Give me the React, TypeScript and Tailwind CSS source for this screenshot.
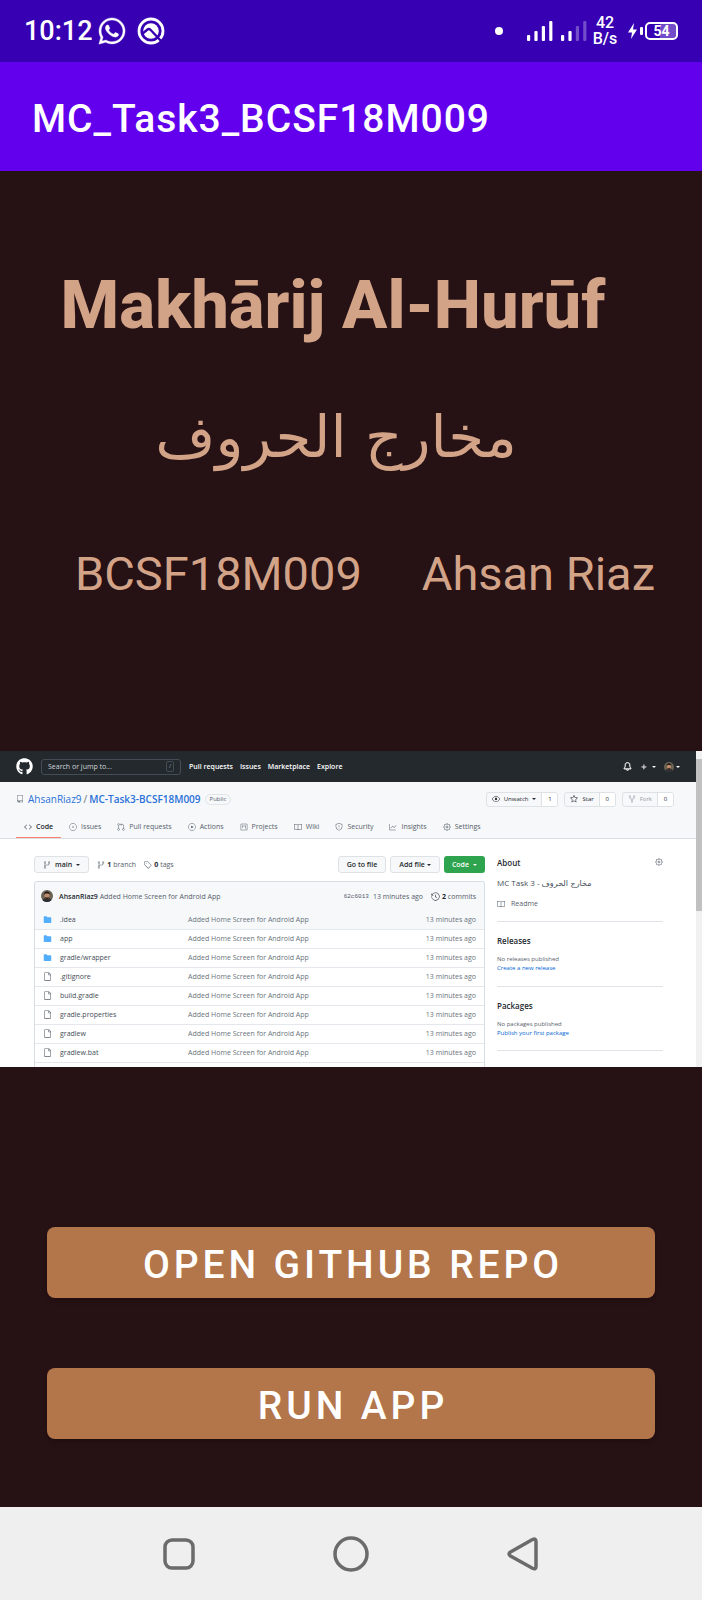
import type { ReactNode } from 'react';
import { FaGithub, FaWhatsapp } from 'react-icons/fa';
import {
  GoBell,
  GoBook,
  GoCode,
  GoEye,
  GoFile,
  GoFileDirectoryFill,
  GoGear,
  GoGitBranch,
  GoGitPullRequest,
  GoGraph,
  GoHistory,
  GoIssueOpened,
  GoPlay,
  GoPlus,
  GoProject,
  GoRepo,
  GoRepoForked,
  GoShield,
  GoStar,
  GoTag,
} from 'react-icons/go';

const files = [
  { name: '.idea', folder: true },
  { name: 'app', folder: true },
  { name: 'gradle/wrapper', folder: true },
  { name: '.gitignore', folder: false },
  { name: 'build.gradle', folder: false },
  { name: 'gradle.properties', folder: false },
  { name: 'gradlew', folder: false },
  { name: 'gradlew.bat', folder: false },
];

const tabs: { label: string; icon: ReactNode }[] = [
  { label: 'Code', icon: <GoCode /> },
  { label: 'Issues', icon: <GoIssueOpened /> },
  { label: 'Pull requests', icon: <GoGitPullRequest /> },
  { label: 'Actions', icon: <GoPlay /> },
  { label: 'Projects', icon: <GoProject /> },
  { label: 'Wiki', icon: <GoBook /> },
  { label: 'Security', icon: <GoShield /> },
  { label: 'Insights', icon: <GoGraph /> },
  { label: 'Settings', icon: <GoGear /> },
];

function Caret() {
  return (
    <svg viewBox="0 0 8 4" className="h-[2px] w-1 shrink-0" fill="currentColor" aria-hidden="true">
      <path d="M0 0h8L4 4z" />
    </svg>
  );
}

function Avatar({ className }: { className: string }) {
  return (
    <svg viewBox="0 0 24 24" className={className} aria-hidden="true">
      <circle cx="12" cy="12" r="12" fill="#6b6353" />
      <path d="M3 20a12 12 0 0 0 18 0c-2-3-5-4-9-4s-7 1-9 4z" fill="#2d2f33" />
      <ellipse cx="12" cy="11.500" rx="5" ry="6.500" fill="#c08d6c" />
      <path d="M6 10c0-5 3-7 6-7s6 2 6 7c-1-2-2-3-6-3s-5 1-6 3z" fill="#1f1a17" />
      <path d="M8 14c2 1 6 1 8 0 0 3-2 5-4 5s-4-2-4-5z" fill="#3a2a22" />
    </svg>
  );
}

function Signal({ active }: { active: number }) {
  const bars = [6, 10, 15, 20];
  return (
    <svg viewBox="0 0 26 20" className="h-5 w-[26px]" fill="#fff" aria-hidden="true">
      {bars.map((h, i) => (
        <rect key={h} x={i * 7.4} y={20 - h} width="3.200" height={h} rx="1" opacity={i < active ? 1 : 0.3} />
      ))}
    </svg>
  );
}

function StatusBar() {
  return (
    <div className="flex h-[62px] items-center bg-[#3700b3] pr-6 pl-6 text-white">
      <span className="text-[27px] leading-8 font-medium">10:12</span>
      <FaWhatsapp className="ml-1 size-[30px]" stroke="currentColor" strokeWidth="6" aria-label="WhatsApp" />
      <svg viewBox="0 0 28 28" className="ml-[10px] size-7" fill="none" aria-hidden="true">
        <circle cx="14" cy="14" r="12" stroke="#fff" strokeWidth="2.800" />
        <circle cx="14" cy="14" r="7.800" fill="#fff" />
        <path d="M5 17L10.500 12.500Q12 11.500 13.500 12.800L25 25" stroke="#3700b3" strokeWidth="2.400" />
      </svg>
      <span className="ml-auto size-2 rounded-full bg-white" />
      <span className="ml-6 flex gap-2">
        <Signal active={4} />
        <Signal active={2} />
      </span>
      <span className="ml-1 w-7 text-center text-base leading-4 font-medium">
        42
        <br />
        B/s
      </span>
      <svg viewBox="0 0 18 20" className="ml-2 h-5 w-[18px]" fill="#fff" aria-hidden="true">
        <path d="M7 2L1 11.500h4L4 18l6-9.500H6z" />
        <rect x="13" y="6" width="3" height="8" rx="1" />
      </svg>
      <span className="flex h-[18px] w-[33px] items-center justify-center rounded-[5px] border-2 border-white bg-linear-to-r from-transparent from-45% to-white/30 to-45% text-sm leading-4 font-bold">
        54
      </span>
    </div>
  );
}

function CountButton({ icon, label, count, caret, muted }: { icon: ReactNode; label: string; count: number; caret?: boolean; muted?: boolean }) {
  return (
    <div className="flex h-[15px] items-stretch overflow-hidden rounded-[3px] border border-[#dfe2e5] bg-[#f6f8fa] text-[6px]">
      <button className={`flex items-center gap-1 px-[5px] ${muted ? 'text-[#959da5]' : 'text-[#24292e]'}`}>
        <span className="text-[8px]">{icon}</span>
        {label}
        {caret && <Caret />}
      </button>
      <span className="flex w-4 items-center justify-center border-l border-[#dfe2e5] bg-white">{count}</span>
    </div>
  );
}

function RepoPage() {
  return (
    <section className="flex h-[316px] overflow-hidden bg-white font-['Open_Sans',sans-serif] text-[7px] leading-[9px] text-[#24292e]" aria-label="GitHub repository">
      <div className="min-w-0 grow">
        <header className="flex h-[31px] items-center bg-[#24292e] pr-4 pl-4 font-semibold text-white">
          <FaGithub className="size-[17px]" aria-label="GitHub" />
          <div className="ml-2 flex h-4 w-[140px] items-center rounded-[3px] border border-[#444d56] px-[6px]">
            <input aria-label="Search" placeholder="Search or jump to..." className="min-w-0 grow bg-transparent font-normal outline-none placeholder:text-[#d1d5da]" />
            <span className="flex h-[11px] w-2 items-center justify-center rounded-[2px] border border-[#444d56] text-[6px] font-normal text-[#8b949e]">/</span>
          </div>
          <nav className="ml-2 flex gap-[7px]">
            <a href="#pulls">Pull requests</a>
            <a href="#issues">Issues</a>
            <a href="#marketplace">Marketplace</a>
            <a href="#explore">Explore</a>
          </nav>
          <GoBell className="ml-auto size-[9px]" strokeWidth="1" />
          <span className="ml-2 flex items-center gap-1">
            <GoPlus className="size-2" strokeWidth="1" />
            <Caret />
          </span>
          <span className="ml-2 flex items-center gap-[2px]">
            <Avatar className="size-[10px]" />
            <Caret />
          </span>
        </header>

        <div className="border-b border-[#d8dee4] bg-[#f6f8fa] px-4">
          <div className="flex h-[34px] items-center">
            <GoRepo className="size-2 text-[#6a737d]" />
            <h2 className="ml-1 flex gap-[2px] text-[10px] leading-3 text-[#6a737d]">
              <a href="#owner" className="text-[#2a70d8]">AhsanRiaz9</a>/
              <a href="#repo" className="font-semibold text-[#2a70d8]">MC-Task3-BCSF18M009</a>
            </h2>
            <span className="ml-1 rounded-full border border-[#e1e4e8] px-1 text-[6px] text-[#57606a]">Public</span>
            <div className="mr-[6px] ml-auto flex gap-[6px]">
              <CountButton icon={<GoEye />} label="Unwatch" count={1} caret />
              <CountButton icon={<GoStar />} label="Star" count={0} />
              <CountButton icon={<GoRepoForked />} label="Fork" count={0} muted />
            </div>
          </div>
          <nav className="flex">
            {tabs.map((tab, i) => (
              <a
                key={tab.label}
                href={`#${tab.label}`}
                className={`flex h-[22px] items-center gap-1 border-b px-2 whitespace-nowrap ${i === 0 ? 'border-[#f9826c] font-semibold' : 'border-transparent text-[#57606a]'}`}
              >
                <span className="text-[8px]">{tab.icon}</span>
                {tab.label}
              </a>
            ))}
          </nav>
        </div>

        <div className="flex gap-3 pt-[17px] pr-[33px] pl-[34px]">
          <div className="min-w-0 grow">
            <div className="flex h-[17px] items-center">
              <button className="flex h-[17px] items-center gap-1 rounded-[3px] border border-[#dfe2e5] bg-[#f6f8fa] px-2 font-semibold">
                <GoGitBranch className="size-2 text-[#57606a]" />
                main
                <Caret />
              </button>
              <span className="ml-2 flex items-center gap-[2px] text-[#57606a]">
                <GoGitBranch className="size-2" />
                <b className="text-[#24292e]">1</b> branch
              </span>
              <span className="ml-2 flex items-center gap-[2px] text-[#57606a]">
                <GoTag className="size-2" />
                <b className="text-[#24292e]">0</b> tags
              </span>
              <div className="ml-auto flex gap-1 font-semibold">
                <button className="h-[17px] rounded-[3px] border border-[#dfe2e5] bg-[#f6f8fa] px-2">Go to file</button>
                <button className="flex h-[17px] items-center gap-[2px] rounded-[3px] border border-[#dfe2e5] bg-[#f6f8fa] px-2">
                  Add file
                  <Caret />
                </button>
                <button className="flex h-[17px] items-center gap-1 rounded-[3px] bg-[#2ea44f] px-2 text-white">
                  Code
                  <Caret />
                </button>
              </div>
            </div>

            <div className="mt-2 overflow-hidden rounded-t-[3px] border border-b-0 border-[#d5dde5]">
              <div className="flex h-7 items-center bg-[#f6f8fa] pr-2 pl-[6px] text-[#57606a]">
                <Avatar className="size-3" />
                <span className="ml-[6px]">
                  <b className="font-semibold text-[#24292e]">AhsanRiaz9</b> Added Home Screen for Android App
                </span>
                <span className="ml-auto font-['Liberation_Mono',monospace] text-[6px]">62c6013</span>
                <span className="ml-1">13 minutes ago</span>
                <GoHistory className="ml-2 size-[9px] text-[#24292e]" />
                <span className="ml-[2px]">
                  <b className="text-[#24292e]">2</b> commits
                </span>
              </div>
              <table className="w-full table-fixed">
                <tbody>
                  {files.map((file, i) => (
                    <tr key={file.name} className={`h-[19px] border-b border-[#e4e8ec] ${i === 0 ? 'bg-[#f6f8fa]' : 'bg-white'}`}>
                      <td className="w-[25px] pl-2">
                        {file.folder ? <GoFileDirectoryFill className="size-[9px] text-[#54aeff]" /> : <GoFile className="size-[9px] text-[#57606a]" />}
                      </td>
                      <td className="w-32 text-[#444d56]">{file.name}</td>
                      <td className="text-[#6a737d]">Added Home Screen for Android App</td>
                      <td className="w-20 pr-2 text-right text-[#6a737d]">13 minutes ago</td>
                    </tr>
                  ))}
                </tbody>
              </table>
              <div className="h-3" />
            </div>
          </div>

          <aside className="w-[166px] shrink-0">
            <div className="flex h-3 items-center justify-between">
              <h3 className="text-[8px] font-semibold">About</h3>
              <GoGear className="size-2 text-[#57606a]" />
            </div>
            <p className="mt-[10px] text-[8px] leading-[10px] text-[#444d56]">
              MC Task 3 - <span lang="ar" className="font-['DejaVu_Sans',sans-serif]">مخارج الحروف</span>
            </p>
            <a href="#readme" className="mt-[10px] flex items-center gap-[6px] text-[#57606a]">
              <GoBook className="size-2" />
              Readme
            </a>
            <div className="mt-[13px] h-[65px] border-t border-[#e1e4e8] pt-[14px]">
              <h3 className="text-[8px] leading-[10px] font-semibold">Releases</h3>
              <p className="mt-[9px] text-[6px] text-[#57606a]">No releases published</p>
              <a href="#release" className="block text-[6px] text-[#0366d6]">Create a new release</a>
            </div>
            <div className="h-[65px] border-y border-[#e1e4e8] pt-[14px]">
              <h3 className="text-[8px] leading-[10px] font-semibold">Packages</h3>
              <p className="mt-[9px] text-[6px] text-[#57606a]">No packages published</p>
              <a href="#package" className="block text-[6px] text-[#0366d6]">Publish your first package</a>
            </div>
          </aside>
        </div>
      </div>
      <div className="w-[6px] shrink-0 bg-[#f1f1f1] pt-2">
        <div className="h-[152px] bg-[#c1c1c1]" />
      </div>
    </section>
  );
}

export default function App() {
  return (
    <div className="flex min-h-screen flex-col bg-[#261114] font-[Roboto,sans-serif]">
      <StatusBar />
      <header className="flex h-[109px] items-center bg-[#6200ee] px-8 pt-1">
        <h1 className="text-[39px] leading-[48px] font-medium tracking-wide text-white">MC_Task3_BCSF18M009</h1>
      </header>

      <main className="flex grow flex-col text-[#d3a388]">
        <div className="flex flex-col items-center pt-[94px]">
          <h2 className="mr-9 text-[67px] leading-[80px] font-extrabold">Makhārij Al-Hurūf</h2>
          <p lang="ar" dir="rtl" className="mt-12 mr-[30px] font-['DejaVu_Sans',sans-serif] text-[58px] leading-[88px]">
            مخارج الحروف
          </p>
        </div>
        <div className="mt-[65px] mr-[47px] ml-[75px] flex justify-between text-[47px] leading-[56px]">
          <span>BCSF18M009</span>
          <span>Ahsan Riaz</span>
        </div>
        <div className="mt-[149px]">
          <RepoPage />
        </div>
        <div className="mt-40 mb-17 flex flex-col gap-[70px] px-[47px] text-[39px] leading-[48px] font-medium tracking-widest text-white">
          <button className="h-[71px] rounded-lg bg-[#b3754a] pt-1 pl-1 shadow-md">OPEN GITHUB REPO</button>
          <button className="h-[71px] rounded-lg bg-[#b3754a] pt-1 pl-1 shadow-md">RUN APP</button>
        </div>
      </main>

      <nav className="grid h-[93px] grid-cols-3 items-center bg-[#efefef] px-[93px] text-[#6b6b6b]">
        <button aria-label="Recent apps" className="flex justify-center">
          <svg viewBox="0 0 36 36" className="size-9" fill="none" stroke="currentColor" strokeWidth="3.500">
            <rect x="4" y="4" width="28" height="28" rx="7" />
          </svg>
        </button>
        <button aria-label="Home" className="flex justify-center">
          <svg viewBox="0 0 36 36" className="size-9" fill="none" stroke="currentColor" strokeWidth="3.500">
            <circle cx="18" cy="18" r="16" />
          </svg>
        </button>
        <button aria-label="Back" className="flex justify-center">
          <svg viewBox="0 0 36 36" className="size-9" fill="none" stroke="currentColor" strokeWidth="3.500" strokeLinejoin="round">
            <path d="M27.500 3.500Q31 2 31 5.500V30.500Q31 34 27.500 32.200L5.500 20Q2.500 18 5.500 16z" />
          </svg>
        </button>
      </nav>
    </div>
  );
}
